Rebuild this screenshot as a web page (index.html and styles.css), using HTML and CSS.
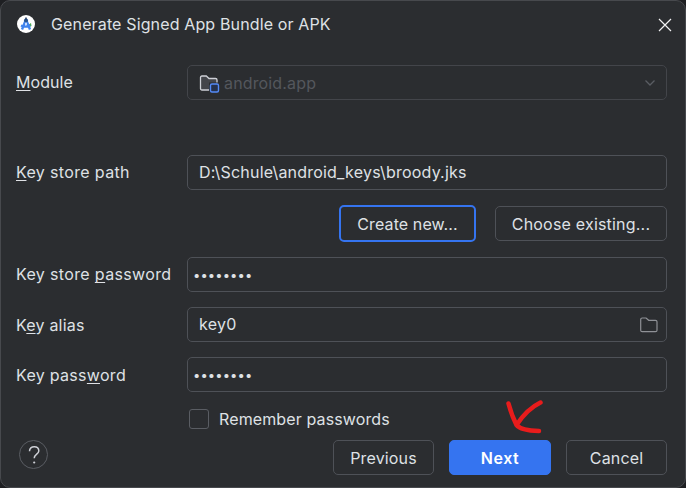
FILE: index.html
```html
<!DOCTYPE html>
<html lang="en">
<head>
<meta charset="utf-8">
<title>Generate Signed App Bundle or APK</title>
<link rel="stylesheet" href="styles.css">
</head>
<body>
<main class="dialog">
  <header class="titlebar">
    <svg class="logo" width="18" height="18" viewBox="0 0 18 18">
      <circle cx="9" cy="9" r="9" fill="#fff"/>
      <path d="M11 10l3-2 .5 3-2 1z" fill="#4caf50"/>
      <path d="M9 4.500L5 14.500M9 4.500l4 10M4 10.500Q9 13 13 10" fill="none" stroke="#3f83ed" stroke-width="2.400"/>
      <circle cx="9" cy="5.500" r="2" fill="#28548f"/>
      <path d="M9 2.500v2" stroke="#20395f" stroke-width="1.500"/>
      <circle cx="9" cy="8.500" r="1" fill="#cfe1ff"/>
    </svg>
    <h1 class="title">Generate Signed App Bundle or APK</h1>
    <svg class="close" width="14" height="14" viewBox="0 0 14 14"><path d="M1 1l12 12M13 1L1 13" stroke="#f2f2f3" stroke-width="1.200"/></svg>
  </header>
  <section class="form">
    <div class="row row-module">
      <span class="label label-module"><u>M</u>odule</span>
      <div class="field disabled">
        <svg class="module-icon" width="21" height="20" viewBox="0 0 21 20">
          <path d="M1.500 15V4.500Q1.500 3 3 3h4.500L10 5.500h6.500Q18 5.500 18 7v10H3Q1.500 17 1.500 15z" fill="#43454a"/>
          <path d="M10 17H3Q1.500 17 1.500 15.500v-11Q1.500 3 3 3h4.300L10 5.500h6.500Q18 5.500 18 7v3" fill="none" stroke="#ced0d6" stroke-width="1.300"/>
          <rect x="10" y="9.500" width="11" height="10.500" fill="#2b2d30"/>
          <rect x="11.500" y="11" width="8" height="8" rx="1.500" fill="#25324d" stroke="#548af7" stroke-width="1.400"/>
        </svg>
        <span class="module-name">android.app</span>
        <svg class="chevron" width="12" height="8" viewBox="0 0 12 8"><path d="M1.500 1.500L6 6l4.500-4.500" fill="none" stroke="#5a5d63" stroke-width="1.300"/></svg>
      </div>
    </div>
    <div class="row row-path">
      <span class="label label-path"><u>K</u>ey store path</span>
      <div class="field"><span class="path-value">D:\Schule\android_keys\broody.jks</span></div>
    </div>
    <div class="path-actions">
      <button class="btn create"><span>Create new...</span></button>
      <button class="btn choose"><span>Choose existing...</span></button>
    </div>
    <div class="row">
      <span class="label label-store">Key store <u>p</u>assword</span>
      <div class="field secret"><span>••••••••</span></div>
    </div>
    <div class="row">
      <span class="label label-alias">K<u>e</u>y alias</span>
      <div class="field"><span class="alias-value">key0</span>
        <svg class="browse" width="20" height="18" viewBox="0 0 20 18"><path d="M1.700 3.500Q1.700 2 3.200 2h3.900L9.700 4.300h6.800Q18 4.300 18 5.800v8.400q0 1.500-1.500 1.500H3.200q-1.500 0-1.500-1.500z" fill="none" stroke="#8f9196" stroke-width="1.200"/></svg>
      </div>
    </div>
    <div class="row">
      <span class="label label-key">Key pass<u>w</u>ord</span>
      <div class="field secret"><span>••••••••</span></div>
    </div>
    <label class="remember"><span class="box"></span><span class="remember-text">Remember passwords</span></label>
  </section>
  <footer class="footer">
    <button class="help" aria-label="Help"><svg width="14" height="20" viewBox="0 0 14 20"><path d="M2.500 6.300C2.500 3.300 4.500 1.700 7.200 1.700S11.800 3.400 11.800 5.900C11.800 9 7.200 9.300 7.200 13.200" fill="none" stroke="#ced0d6" stroke-width="1.500"/><circle cx="7.200" cy="17.500" r="1.100" fill="#ced0d6"/></svg></button>
    <div class="footer-actions">
      <button class="btn nav">Previous</button>
      <button class="btn nav next">Next</button>
      <button class="btn nav">Cancel</button>
    </div>
  </footer>
  <svg class="arrow" width="44" height="40" viewBox="0 0 44 40"><path d="M5.500 6.500Q8.500 18 13.500 28Q24 12 37.500 5.500M13.500 28Q18 33.500 36 34" fill="none" stroke="#e81c1c" stroke-width="4.500" stroke-linecap="round" stroke-linejoin="round"/></svg>
</main>
</body>
</html>
```
FILE: styles.css
```css
* { box-sizing: border-box; }
body {
  margin: 0;
  background: #1e1f22;
  font: 16px/20px Inter, sans-serif;
  color: #dfe1e5;
}
.dialog {
  position: relative;
  width: 686px;
  height: 488px;
  border: 1px solid #47494d;
  border-radius: 10px;
  background: #2b2d30;
  overflow: hidden;
}
.titlebar {
  display: flex;
  align-items: center;
  height: 47px;
  padding: 0 13px 0 16px;
}
.title {
  flex: 1;
  margin: 0 0 2px 16px;
  font-size: 16px;
  font-weight: 400;
  letter-spacing: .14px;
}
.close { margin-top: 1px; }
.logo { flex: none; margin-bottom: 1px; }
.form { padding: 17px 18px 0 15px; }
.row {
  display: grid;
  grid-template-columns: 171px 480px;
  align-items: center;
  height: 35px;
  margin-bottom: 15px;
}
.label, .module-name, .path-value, .alias-value { white-space: nowrap; letter-spacing: .3px; }
.label-module { letter-spacing: .05px; }
.label-module, .label-path, .label-store { padding-bottom: 2px; }
.label-path, .label-store { letter-spacing: .35px; }
.label-alias { letter-spacing: .2px; }
.module-name { letter-spacing: .15px; }
.path-value { letter-spacing: .2px; }
.path-value, .alias-value { padding-bottom: 2px; }
u {
  text-decoration-thickness: 1px;
  text-underline-offset: 2px;
  text-decoration-skip-ink: none;
}
.row-module { margin-bottom: 55px; }
.row-path { margin-bottom: 16px; }
.field {
  display: flex;
  align-items: center;
  height: 35px;
  padding: 0 7px 0 11px;
  border: 1px solid #4e5157;
  border-radius: 5px;
}
.disabled { border-color: #43454a; color: #54575d; }
.module-name { margin-left: 4px; }
.chevron { margin-left: auto; margin-right: 3px; }
.browse { margin-left: auto; }
.secret { padding-left: 5px; font-size: 13px; letter-spacing: .1px; }
.path-actions {
  display: flex;
  justify-content: flex-end;
  gap: 19px;
  height: 35px;
  margin-bottom: 16px;
}
.btn {
  height: 35px;
  padding: 0;
  border: 1px solid #4e5157;
  border-radius: 5px;
  background: none;
  color: inherit;
  font: inherit;
  letter-spacing: .15px;
  white-space: nowrap;
}
.create { width: 137px; height: 37px; margin-top: -1px; border: 2px solid #3574f0; letter-spacing: .1px; }
.choose { width: 172px; letter-spacing: .2px; }
.remember { display: flex; align-items: center; height: 20px; margin: 17px 0 0 173px; }
.box { width: 20px; height: 20px; border: 1px solid #5a5d63; border-radius: 3px; }
.remember-text { margin-left: 10px; letter-spacing: .12px; }
.footer {
  display: flex;
  justify-content: space-between;
  padding: 11px 18px 0 18px;
}
.help {
  display: grid;
  place-items: center;
  width: 29px;
  height: 29px;
  padding: 0;
  border: 1px solid #5a5d63;
  border-radius: 50%;
  background: none;
}
.footer-actions { display: flex; gap: 15px; }
.nav { width: 101px; }
.next { width: 102px; border-color: #3574f0; background: #3574f0; color: #fff; font-weight: 600; letter-spacing: .6px; }
.arrow { position: absolute; left: 502px; top: 396px; }
```
